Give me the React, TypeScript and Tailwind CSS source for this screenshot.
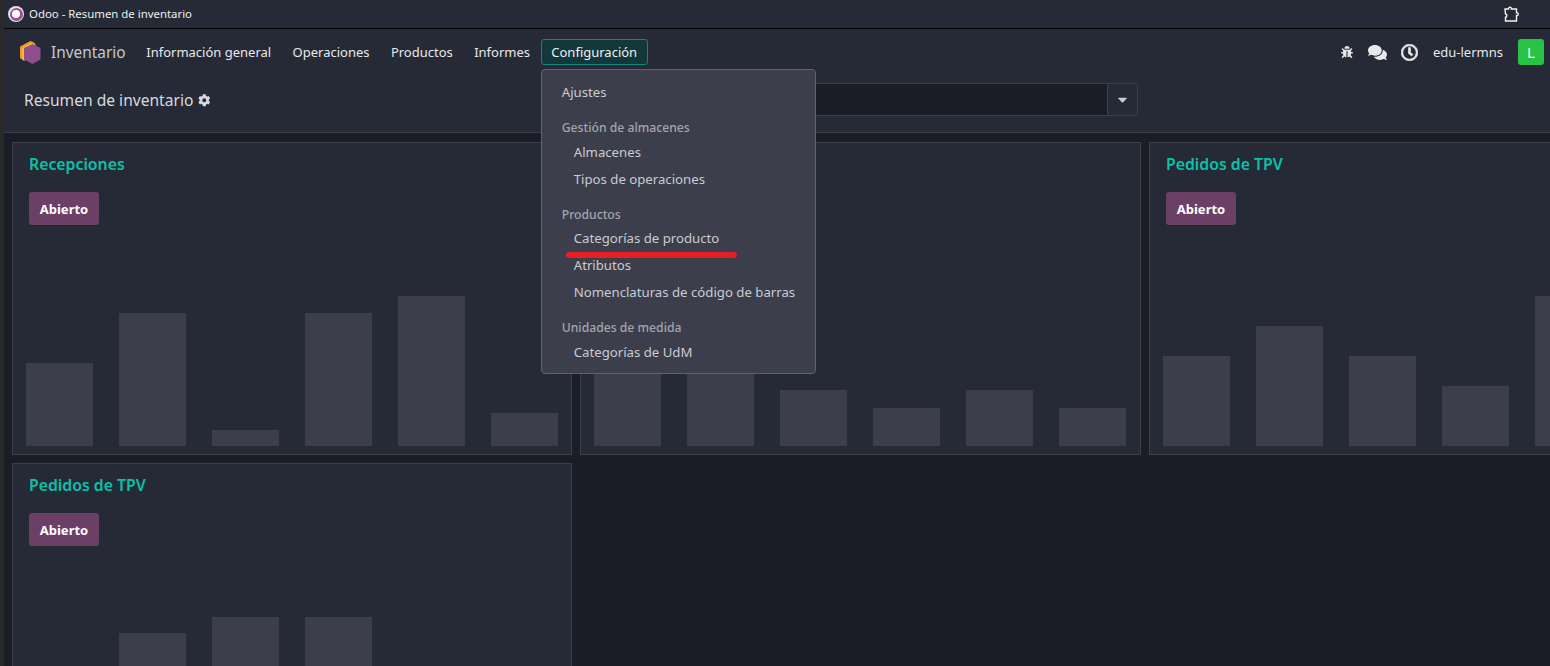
import type { JSX } from 'react';
import { FaBug, FaCaretDown, FaCog, FaComments, FaRegClock } from 'react-icons/fa';

const NAV_ITEMS = ['Información general', 'Operaciones', 'Productos', 'Informes'];

/** The second card sits behind the open dropdown, so its heading stays hidden */
const CARDS = [
  { title: 'Recepciones', bars: [83, 133, 16, 133, 150, 33] },
  { title: '', bars: [100, 100, 56, 38, 56, 38] },
  { title: 'Pedidos de TPV', bars: [90, 120, 90, 60, 150, 90] },
  { title: 'Pedidos de TPV', bars: [0, 134, 150, 150, 50, 50] },
];

/** Odoo app icon: purple hexagon over an orange one */
const AppLogo = (): JSX.Element => (
  <svg width="21" height="23" viewBox="0 0 21 23" className="shrink-0">
    <path d="M10.500 0 0 5.500V17l4 3 12-16-2-2.500z" fill="#f0982e" />
    <path d="M2 8 3.500 6 11 2l3 1.500-9 16-3-1.500z" fill="#f7b73d" />
    <path d="M12.500 3 20.500 7v11.500L12.500 23 4 18.500V7z" fill="#8f4f8c" />
  </svg>
);

/** Browser extension puzzle icon in the title bar */
const PuzzleIcon = (): JSX.Element => (
  <svg width="16" height="16" viewBox="0 0 16 16" fill="none" stroke="#f2f2f2" strokeWidth="1.400">
    <path d="M1 3h3.500c-.2-2.300 3.200-2.300 3 0h5v3.800c2.300-.4 2.300 3 0 2.800v5.400H1.500v-3.800c1.700.2 1.700-3.400 0-3.200z" />
  </svg>
);

const Card = ({ title, bars }: { title: string; bars: number[] }): JSX.Element => (
  <div className="flex h-[313px] flex-col border border-[#3c3e4b] bg-[#262a36] px-4 pt-[9px]">
    {title && (
      <>
        <h2 className="text-[15.800px] leading-6 font-semibold text-[#08c2aa]">{title}</h2>
        <div>
          <button className="mt-[16px] h-[33px] w-[70px] rounded-[3px] bg-[#6b3f66] pt-[2px] text-[13px] font-bold text-white">
            Abierto
          </button>
        </div>
      </>
    )}
    <div className="-mx-[3px] mt-auto mb-[8px] flex items-end gap-[26px]">
      {bars.map((height, index) => (
        <div
          key={index}
          className="w-[67px] shrink-0 bg-[#3c3e4b]"
          style={{ height }}
        />
      ))}
    </div>
  </div>
);

const MenuHeader = ({ label, className }: { label: string; className: string }): JSX.Element => (
  <div className={`pl-[20px] text-[12.200px] font-medium text-[#a3a5ad] ${className}`}>
    {label}
  </div>
);

const MenuItem = ({ label, indent = true }: { label: string; indent?: boolean }): JSX.Element => (
  <div className={indent ? 'h-[27px] pl-[32px] leading-[27px]' : 'h-[27px] pl-[20px] leading-[27px]'}>
    {label}
  </div>
);

const App = (): JSX.Element => (
  <div className="flex h-[666px] w-[1550px] overflow-hidden bg-[#1b1d26] font-['Noto_Sans',sans-serif] text-[13px] text-[#d7d9de]">
    <div className="w-[4px] shrink-0 bg-[#2a2a2a]" />
    <div className="flex min-w-0 flex-1 flex-col">
      {/* Browser window title bar */}
      <div className="flex h-[29px] shrink-0 items-center border-b border-black bg-[#262a36] pl-[4px] text-[11.400px] text-[#eceef1]">
        <span className="mr-[5px] flex h-[16px] w-[16px] items-center justify-center rounded-full bg-[#e8dfe8]">
          <span className="flex h-[13px] w-[13px] items-center justify-center rounded-full bg-[#9b4f96]">
            <span className="h-[8px] w-[8px] rounded-full bg-white" />
          </span>
        </span>
        Odoo - Resumen de inventario
        <span className="mr-[30px] ml-auto">
          <PuzzleIcon />
        </span>
      </div>

      {/* Main navbar */}
      <div className="flex h-[46px] shrink-0 items-center bg-[#262a36] pr-[6px] pl-[16px]">
        <AppLogo />
        <span className="mr-[10px] ml-[10px] pt-[1px] text-[15.400px] text-[#c4c7ce]">Inventario</span>
        {NAV_ITEMS.map((item) => (
          <span key={item} className="px-[10.700px] pt-[1px] text-[#e6e8eb]">
            {item}
          </span>
        ))}
        <div className="relative">
          <div className="flex h-[26px] w-[107px] items-center justify-center rounded-[3px] border border-[#0f8a7c] bg-[#12383c] pt-[1px] text-[#eef0f2]">
            Configuración
          </div>
          {/* Open dropdown */}
          <div className="absolute top-[30px] left-0 z-10 h-[305px] w-[275px] rounded-[4px] border border-[#5f636f] bg-[#3c3e4b] pt-[9px] text-[13.200px] text-[#c9ccd2]">
            <MenuItem label="Ajustes" indent={false} />
            <MenuHeader label="Gestión de almacenes" className="mt-[11px] h-[22px] leading-[22px]" />
            <MenuItem label="Almacenes" />
            <MenuItem label="Tipos de operaciones" />
            <MenuHeader label="Productos" className="mt-[11px] h-[21px] leading-[21px]" />
            <MenuItem label="Categorías de producto" />
            <MenuItem label="Atributos" />
            <MenuItem label="Nomenclaturas de código de barras" />
            <MenuHeader label="Unidades de medida" className="mt-[11px] h-[22px] leading-[22px]" />
            <MenuItem label="Categorías de UdM" />
            {/* Red marker drawn over the screenshot */}
            <div className="absolute top-[182px] left-[24px] h-[6px] w-[171px] rounded-full bg-[#e81e25]" />
          </div>
        </div>
        <div className="ml-auto flex items-center text-[#e6e8eb]">
          <FaBug className="mr-[15px] text-[12px]" />
          <FaComments className="mr-[14px] text-[19px]" />
          <FaRegClock className="mr-[15px] stroke-current stroke-[24] text-[17px]" />
          <span className="pt-[1px]">edu-lermns</span>
          <span className="ml-[15px] flex h-[26px] w-[26px] items-center justify-center rounded-[3px] bg-[#28c244] text-[15px] text-white">
            L
          </span>
        </div>
      </div>

      {/* Control panel */}
      <div className="flex h-[58px] shrink-0 items-start justify-between border-b border-[#3c3e4b] bg-[#262a36] pr-[412px] pl-[20px]">
        <div className="mt-[14px] flex items-center text-[15.600px] text-[#d7d9de]">
          Resumen de inventario
          <FaCog className="ml-[5px] text-[12.500px]" />
        </div>
        <div className="mt-[8px] flex h-[33px] w-[340px] rounded-[3px] border border-[#3c3e4b]">
          <div className="flex-1 bg-[#1b1d26]" />
          <div className="flex w-[30px] items-center justify-center border-l border-[#3c3e4b] text-[15px] text-[#c9ccd2]">
            <FaCaretDown />
          </div>
        </div>
      </div>

      {/* Kanban dashboard */}
      <div className="grid grid-cols-[560px_561px_561px] gap-[8px] pt-[9px] pl-[8px]">
        {CARDS.map((card, index) => (
          <Card key={index} title={card.title} bars={card.bars} />
        ))}
      </div>
    </div>
  </div>
);

export default App;
